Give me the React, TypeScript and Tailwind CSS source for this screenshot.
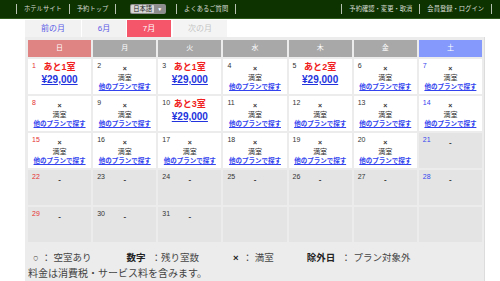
import React from 'react';

type Day = {
  d: number;
  kind: 'left' | 'full' | 'none' | 'empty';
  rooms?: number;
};

const font = { fontFamily: '"Liberation Sans", "Noto Sans CJK JP", sans-serif' };

const days: Day[] = [
  { d: 1, kind: 'left', rooms: 1 },
  { d: 2, kind: 'full' },
  { d: 3, kind: 'left', rooms: 1 },
  { d: 4, kind: 'full' },
  { d: 5, kind: 'left', rooms: 2 },
  { d: 6, kind: 'full' },
  { d: 7, kind: 'full' },
  { d: 8, kind: 'full' },
  { d: 9, kind: 'full' },
  { d: 10, kind: 'left', rooms: 3 },
  { d: 11, kind: 'full' },
  { d: 12, kind: 'full' },
  { d: 13, kind: 'full' },
  { d: 14, kind: 'full' },
  { d: 15, kind: 'full' },
  { d: 16, kind: 'full' },
  { d: 17, kind: 'full' },
  { d: 18, kind: 'full' },
  { d: 19, kind: 'full' },
  { d: 20, kind: 'full' },
  ...[21, 22, 23, 24, 25, 26, 27, 28, 29, 30, 31].map((d) => ({ d, kind: 'none' as const })),
  { d: 0, kind: 'empty' },
  { d: 0, kind: 'empty' },
  { d: 0, kind: 'empty' },
  { d: 0, kind: 'empty' },
];

const weekdays = [
  { label: '日', cls: 'bg-[#e08383]' },
  { label: '月', cls: 'bg-[#a8a8a8]' },
  { label: '火', cls: 'bg-[#a8a8a8]' },
  { label: '水', cls: 'bg-[#a8a8a8]' },
  { label: '木', cls: 'bg-[#a8a8a8]' },
  { label: '金', cls: 'bg-[#a8a8a8]' },
  { label: '土', cls: 'bg-[#8499fb]' },
];

const Sep = () => <span className="mx-[7px] h-[10px] w-px bg-[#b8c2b0]" />;

const DayCell: React.FC<{ day: Day; col: number }> = ({ day, col }) => {
  const grey = day.kind === 'none' || day.kind === 'empty';
  const dateColor = col === 0 ? 'text-[#e53030]' : col === 6 ? 'text-[#3344ee]' : 'text-[#333]';

  return (
    <div className={`relative h-[35px] ${grey ? 'bg-[#e4e4e4]' : 'bg-white'}`}>
      {day.d > 0 && (
        <span className={`absolute left-[4px] top-[2px] text-[7px] leading-[9px] ${dateColor}`}>
          {day.d}
        </span>
      )}
      {day.kind === 'left' && (
        <div className="flex flex-col items-center pt-[2px]">
          <span className="text-[9px] font-bold leading-[12px] text-[#f02020]">あと{day.rooms}室</span>
          <span className="text-[10px] font-bold leading-[13px] text-[#2233dd] underline">¥29,000</span>
        </div>
      )}
      {day.kind === 'full' && (
        <div className="flex flex-col items-center pt-[5px]">
          <span className="text-[7px] font-bold leading-[9px] text-[#333]">×</span>
          <span className="text-[7px] leading-[9px] text-[#333]">満室</span>
          <span className="text-[6.5px] font-bold leading-[10px] text-[#3344ee] underline">他のプランで探す</span>
        </div>
      )}
      {day.kind === 'none' && (
        <div className="flex justify-center pt-[5px]">
          <span className="text-[8px] font-bold leading-[10px] text-[#333]">-</span>
        </div>
      )}
    </div>
  );
};

export default function App() {
  return (
    <div className="h-[281px] w-[500px] overflow-hidden bg-white" style={font}>
      <div className="flex h-[19px] items-center border-b border-[#2e5a1c] bg-[#0c3300] text-[6.3px] text-[#d8dcd4]">
        <div className="flex items-center pl-[9px]">
          <Sep />
          <span>ホテルサイト</span>
          <Sep />
          <span>予約トップ</span>
          <Sep />
          <div className="ml-[7px] mr-[3px] flex h-[10px] items-center rounded-[2px] bg-[#8e8e8e] p-[1px]">
            <span className="rounded-[1px] bg-[#d6d6d6] px-[2px] leading-[8px] text-[#222]">日本語</span>
            <span className="px-[3px] text-[5px] leading-[8px] text-white">▼</span>
          </div>
          <Sep />
          <span>よくあるご質問</span>
          <Sep />
        </div>
        <div className="ml-auto flex items-center pr-[1px]">
          <Sep />
          <span>予約確認・変更・取消</span>
          <Sep />
          <span>会員登録・ログイン</span>
          <Sep />
        </div>
      </div>

      <div className="ml-[25px] mt-[1px] flex h-[17px] gap-[1px] text-[8px]">
        <div className="flex w-[56px] items-center justify-center bg-[#f2f2f2] text-[#5a5ae6]">前の月</div>
        <div className="flex w-[44px] items-center justify-center bg-[#f2f2f2] text-[#5a5ae6]">6月</div>
        <div className="flex w-[44px] items-center justify-center bg-[#f5566a] text-white">7月</div>
        <div className="ml-[1px] flex w-[54px] items-center justify-center bg-[#f4f4f4] text-[#c4c4c4]">次の月</div>
      </div>

      <div className="ml-[25px] w-[460px] border-r border-[#dcdcdc] bg-[#ececec] pl-[3px] pt-[3px]">
        <div className="grid w-[454px] grid-cols-7 gap-[2px]">
          {weekdays.map((w) => (
            <div key={w.label} className={`flex h-[17px] items-center justify-center text-[7px] text-white ${w.cls}`}>
              {w.label}
            </div>
          ))}
          {days.map((day, i) => (
            <DayCell key={i} day={day} col={i % 7} />
          ))}
        </div>

        <div className="mt-[9px] flex items-center pl-[5px] text-[9.5px] leading-[13px] text-[#444]">
          <span>○ ： 空室あり</span>
          <span className="ml-[35px] font-bold text-[#222]">数字</span>
          <span className="ml-[6px]">：残り室数</span>
          <span className="ml-[34px] font-bold text-[#222]">×</span>
          <span className="ml-[4px]">： 満室</span>
          <span className="ml-[33px] font-bold text-[#222]">除外日</span>
          <span className="ml-[6px]">： プラン対象外</span>
        </div>
        <div className="mt-[3px] pb-[4px] text-[10px] leading-[13px] text-[#444]">料金は消費税・サービス料を含みます。</div>
      </div>
    </div>
  );
}
